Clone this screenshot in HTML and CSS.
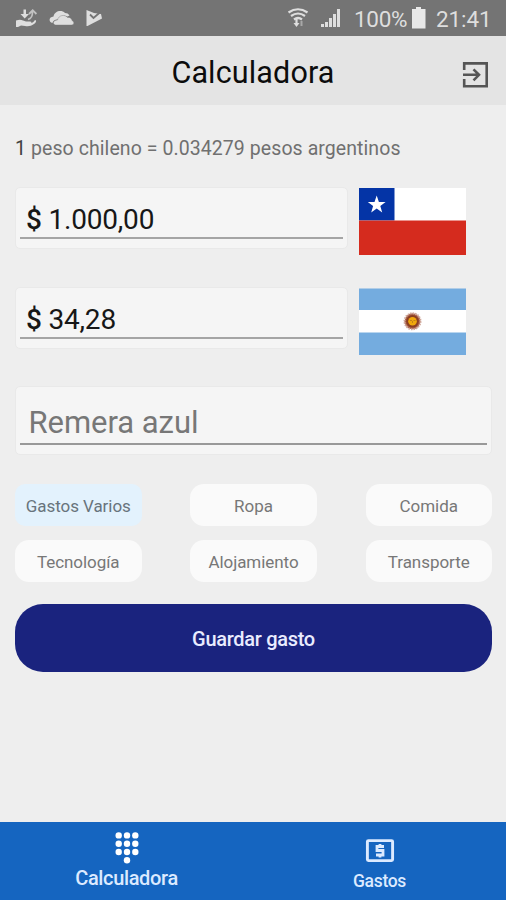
FILE: index.html
```html
<!DOCTYPE html>
<html lang="es">
<head>
<meta charset="utf-8">
<title>Calculadora</title>
<link rel="stylesheet" href="styles.css">
</head>
<body>
<div class="app">
  <div class="status">
    <svg class="notifications" width="90" height="24" viewBox="0 0 90 24" fill="#dedede">
      <path d="M0 15.500c3-1 5-1 7 0l3 1h4c2 0 2 2 0 2.500h-4c4 0 7-1 9-4 2 0 1 3-1 4-3 2-5 2.500-9 2l-4-.5-3 1.500H0z"/>
      <path d="M7.500 4.500h2.500v4.500h3L8.700 13.500 4.500 9h3z"/>
      <path d="M12 14.500c3.500-1 4.500-3 4.500-8M13 9l3.700-3.800L20.400 9" fill="none" stroke="#c2c2c2" stroke-width="1.800"/>
      <path d="M36.500 18c-4-1-4-6 1-6.500 1-5.500 8-7 11.500-3.500 2 0 3.500.8 4.500 2.500l-2 1c-4-2-8 0-9 3-4 0-5.500 1.500-6 3.500z"/>
      <path d="M39.500 20c-3.500-1-2.500-5 2-5 1-5 7.500-6 10-2.500 2.500-.5 4.500 1 4.500 3 2.500 1 2.500 4.500-.5 4.500z" stroke="#747474" stroke-width=".4"/>
      <path d="M70.500 5 78 8l7 1 1 4.500L71.500 21h-1z"/>
      <path d="m74 9.500 3.500 3.500 7.500-6.500" fill="none" stroke="#747474" stroke-width="1.800"/>
    </svg>
    <svg class="signals" width="54" height="24" viewBox="0 0 54 24" fill="none" stroke="#dedede">
      <path d="M.5 7.500q9.500-6.500 19 0M3 11q7-5 14 0M6 14.500q4-3 8 0" stroke-width="2.200"/>
      <path d="M8.500 14v5" stroke-width="2.200"/>
      <path d="M13.500 16v5" stroke="#a8a8a8" stroke-width="2"/>
      <path d="m5.500 18 3 4 3-4z" fill="#dedede" stroke="none"/>
      <path d="M34.500 22v-3M38.500 22v-5M42.500 22v-9M46.500 22V9M50.500 22V4" stroke-width="3"/>
    </svg>
    <span class="percent">100%</span>
    <svg class="battery" width="16" height="22" viewBox="0 0 16 22" fill="#e8e8e8"><path d="M5 0h5v2h4.500v19.500H1V2h4z"/></svg>
    <span class="clock">21:41</span>
  </div>
  <header class="header">
    <h1>Calculadora</h1>
    <svg class="exit" width="28" height="28" viewBox="0 0 28 28" fill="none" stroke="#555" stroke-width="2.600">
      <path d="M3.200 9V2.400h22.500v22.800H3.200V18M2 13.800h16M12.500 8.300l5.500 5.500-5.500 5.500"/>
    </svg>
  </header>
  <main class="content">
    <p class="rate"><span class="one">1</span> peso chileno = 0.034279 pesos argentinos</p>
    <div class="currency">
      <div class="field"><div class="amount chile"><b>$</b> 1.000,00</div></div>
      <svg class="flag" width="107" height="67" viewBox="0 0 107 67">
        <path fill="#fff" d="M0 0h107v33H0z"/><path fill="#0434a6" d="M0 0h35.500v32.500H0z"/><path fill="#d52b1e" d="M0 32.500h107V67H0z"/>
        <path fill="#fff" d="m17.700 7.500 2.200 6.400h6.700l-5.300 4.100 1.900 6.600-5.500-4-5.500 4 1.900-6.600-5.300-4.100h6.700z"/>
      </svg>
    </div>
    <div class="currency">
      <div class="field"><div class="amount argentina"><b>$</b> 34,28</div></div>
      <svg class="flag" width="107" height="67" viewBox="0 0 107 67">
        <path fill="#74acdf" d="M0 .5h107V67H0z"/><path fill="#fff" d="M0 22h107v22.500H0z"/>
        <circle cx="53.500" cy="33.300" r="8" fill="#a9614c" stroke="#cfa89b" stroke-width="2" stroke-dasharray="1.500 1"/>
        <circle cx="53.500" cy="33.300" r="6.300" fill="#8b3f22"/><circle cx="53.500" cy="33.300" r="4.300" fill="#f0a80c"/>
        <path d="M51 32.500h2M54.500 32.500h2M53.500 33v2" stroke="#b9781a" stroke-width=".8"/>
      </svg>
    </div>
    <div class="field description"><div class="placeholder">Remera azul</div></div>
    <div class="chips">
      <div class="chip selected">Gastos Varios</div><div class="chip">Ropa</div><div class="chip">Comida</div>
      <div class="chip">Tecnología</div><div class="chip">Alojamiento</div><div class="chip">Transporte</div>
    </div>
    <div class="save">Guardar gasto</div>
  </main>
  <nav class="nav">
    <div class="tab active">
      <svg width="26" height="34" viewBox="0 0 26 34" fill="#fff">
        <circle cx="4.700" cy="2.400" r="3.200"/><circle cx="13" cy="2.400" r="3.200"/><circle cx="21.300" cy="2.400" r="3.200"/>
        <circle cx="4.700" cy="10.700" r="3.200"/><circle cx="13" cy="10.700" r="3.200"/><circle cx="21.300" cy="10.700" r="3.200"/>
        <circle cx="4.700" cy="19" r="3.200"/><circle cx="13" cy="19" r="3.200"/><circle cx="21.300" cy="19" r="3.200"/>
        <circle cx="13" cy="27.300" r="3.200"/>
      </svg>
      <span>Calculadora</span>
    </div>
    <div class="tab">
      <svg width="30" height="24" viewBox="0 0 30 24" fill="none" stroke="#dceaff">
        <rect x="2.400" y="1.600" width="25.200" height="20" rx="1" stroke-width="2.900"/>
        <path d="M19 7.500h-7v4h6V16h-7M15 5v2.500M15 16v2.500" stroke-width="2.800"/>
      </svg>
      <span>Gastos</span>
    </div>
  </nav>
</div>
</body>
</html>
```
FILE: styles.css
```css
* { box-sizing: border-box; }
body { margin: 0; font-family: Roboto, "Liberation Sans", sans-serif; background: #eee; }
.app { width: 506px; height: 900px; display: flex; flex-direction: column; overflow: hidden; }
svg { display: block; flex: none; overflow: visible; }
.status { height: 36px; flex: none; background: #747474; color: #dedede; display: flex; align-items: flex-start; padding-left: 16px; font-size: 22.500px; line-height: 27px; white-space: nowrap; }
.notifications { margin-top: 5px; }
.signals { margin: 5px 0 0 182px; }
.percent { width: 57px; margin-left: 12px; padding-top: 6px; letter-spacing: -.3px; }
.battery { margin-top: 7px; }
.clock { margin-left: 9px; padding-top: 6px; letter-spacing: -.1px; }
.header { height: 69px; flex: none; background: #e4e4e4; display: grid; grid-template-columns: 45px 1fr 45px; align-items: center; }
.header h1 { grid-column: 2; margin: 0; padding-top: 5px; text-align: center; font-size: 30.500px; line-height: 36px; font-weight: 400; color: #0c0c0c; letter-spacing: .15px; }
.exit { margin-top: 8px; }
.content { flex: 1; padding: 30px 14px 0 15px; }
.rate { margin: 0; height: 52px; padding-top: 1px; font-size: 19.500px; line-height: 25px; color: #707070; white-space: nowrap; letter-spacing: .075px; }
.one { color: #404040; }
.currency { display: flex; align-items: flex-start; gap: 11px; height: 100px; }
.field { width: 333px; height: 62px; padding: 0 4px; background: #f5f5f5; border: 1px solid #e9e9e9; border-radius: 5px; }
.amount { height: 51px; padding: 15px 0 0 6px; border-bottom: 2px solid #a5a5a5; font-size: 28px; line-height: 33px; color: #171717; white-space: nowrap; letter-spacing: -.2px; }
.amount b { font-weight: 500; }
.flag { margin-top: 1px; }
.description { width: 477px; height: 69px; margin-top: -1px; }
.placeholder { height: 58px; padding: 17px 0 0 8.500px; border-bottom: 2px solid #999; font-size: 31px; line-height: 38px; color: #777; letter-spacing: -.05px; }
.chips { display: grid; grid-template-columns: repeat(3, 126.500px); justify-content: space-between; row-gap: 14px; margin-top: 29px; }
.chip { height: 42px; border-radius: 14px; background: #fafafa; color: #777; font-size: 17px; line-height: 45px; text-align: center; letter-spacing: -.05px; }
.selected { background: #e3f2fd; color: #68747c; border-radius: 10px; }
.save { height: 68px; margin-top: 22px; border-radius: 28px; background: #1a237e; color: #e9ecff; text-align: center; font-size: 20px; line-height: 71px; font-weight: 500; letter-spacing: -.3px; }
.nav { height: 78px; flex: none; background: #1565c0; color: #dceaff; display: grid; grid-template-columns: 1fr 1fr; }
.tab { display: flex; flex-direction: column; align-items: center; padding-top: 17px; font-size: 17.500px; font-weight: 500; letter-spacing: -.3px; }
.tab span { line-height: 22px; margin-top: 7px; }
.active { padding-top: 11px; font-size: 20px; letter-spacing: -.35px; }
.active span { line-height: 24px; margin-top: -1px; }
```
